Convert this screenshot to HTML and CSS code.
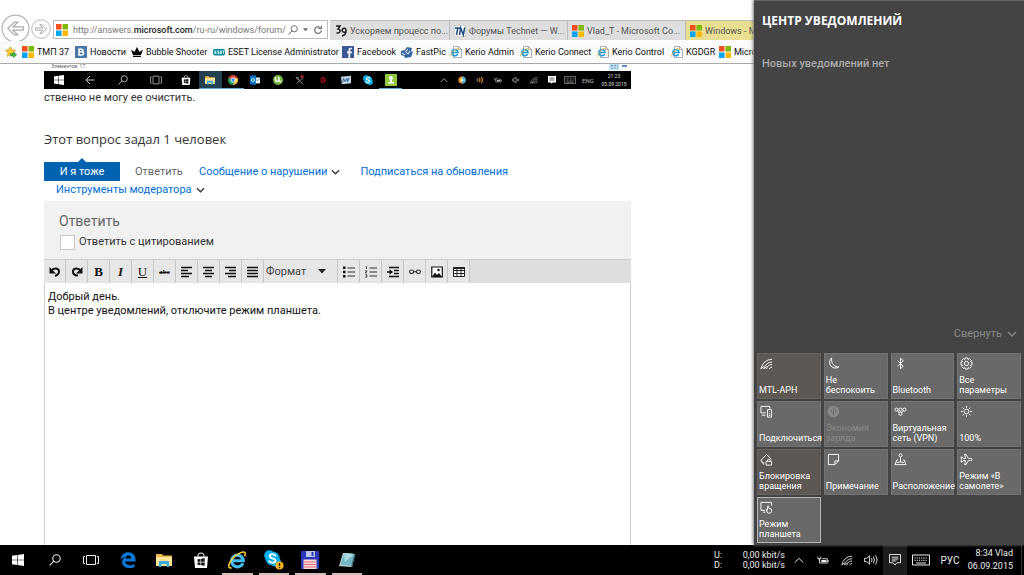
FILE: index.html
```html
<!DOCTYPE html>
<html lang="ru">
<head>
<meta charset="utf-8">
<meta name="viewport" content="width=device-width, initial-scale=1">
<title>Центр уведомлений</title>
<link rel="stylesheet" href="styles.css">
</head>
<body>
<svg class="symbols" aria-hidden="true">
  <symbol id="ms" viewBox="0 0 12 12"><path fill="#f25022" d="M0 0h5.5v5.5H0z"/><path fill="#7fba00" d="M6.5 0H12v5.5H6.5z"/><path fill="#00a4ef" d="M0 6.500h5.500V12H0z"/><path fill="#ffb900" d="M6.500 6.500H12V12H6.500z"/></symbol>
  <symbol id="win" viewBox="0 0 12 12"><path fill="#fff" d="M0 1.700 5 1v4.700H0zM5.600.900 12 0v5.700H5.600zM0 6.300h5V11l-5-.7zM5.600 6.300H12V12l-6.400-.9z"/></symbol>
  <symbol id="search" viewBox="0 0 12 12"><g fill="none" stroke="currentColor" stroke-width="1.100"><circle cx="7.500" cy="4.500" r="3.700"/><path d="M4.900 7.100.6 11.400"/></g></symbol>
  <symbol id="taskview" viewBox="0 0 16 12"><g fill="none" stroke="currentColor"><path d="M3.500 1.500h9v9h-9zM2 2.500H.500v7H2M14 2.500h1.500v7H14"/></g></symbol>
  <symbol id="store" viewBox="0 0 16 16"><path fill="none" stroke="#fff" d="M5 5V3.200Q5 1 8 1t3 2.200V5"/><path fill="#fff" d="M1 4.500h14L14 16H2z"/><path fill="#111" d="m4.500 7.300 3-.4v2.900h-3zM8.100 6.800l3.600-.5v3.500H8.100zM4.500 10.400h3v2.800l-3-.4zM8.100 10.400h3.600v3.400l-3.600-.5z"/></symbol>
  <symbol id="folder" viewBox="0 0 16 14"><path fill="#e9b94e" d="M0 1h6l1 1.500h9V13H0z"/><path fill="#fde599" d="M0 4h16v9H0z"/><path fill="#3fa9e0" d="M3 8h10v6h-2.500v-3h-5v3H3z"/></symbol>
  <symbol id="edge" viewBox="0 0 16 16"><path fill="#0b78d7" d="M.5 7.400C1.100 3 4.200.300 8.300.300c4.700 0 7.300 3.400 7.300 7.400v1.800H5.200c.2 2.700 2.200 3.700 4.800 3.700 1.800 0 3.300-.5 4.600-1.300v3.100A11 11 0 0 1 9 16c-4.200 0-6.800-2.400-6.800-6 0-2.300 1.200-4.200 3.300-5.300C3.300 5 1.600 6 .5 7.400m5-0.900h5.600c0-1.900-1-2.900-2.800-2.900S5.700 4.800 5.500 6.500"/></symbol>
  <symbol id="ie" viewBox="0 0 16 16"><path fill="none" stroke="#46bdf0" stroke-width="2.800" d="M13.200 10.900A5.200 5.200 0 1 1 13.600 8.700H4"/><path fill="none" stroke="#ffcb2f" stroke-width="1.400" d="M3.200 14.800C-.500 16-.2 11.600 4 6.800 8.500 1.600 14 .100 15 1.400c.6.700.4 1.900-.3 3.300"/></symbol>
  <symbol id="iepage" viewBox="0 0 12 12"><path fill="#fff" stroke="#999" stroke-width=".8" d="M3.500.500h5l3 3v8h-8z"/><path fill="none" stroke="#888" stroke-width=".7" d="M8.500.500v3h3"/><path fill="none" stroke="#1a9be0" stroke-width="1.700" d="M7.600 8.200A3.100 3.100 0 1 1 8 6.500H2.500"/><path fill="none" stroke="#f5b92b" stroke-width=".9" d="M1 10.600C-.500 9 3 4.300 6.500 2.700c1.500-.6 2.500-.4 2.200.900"/></symbol>
  <symbol id="skype" viewBox="0 0 16 16"><circle cx="5" cy="5" r="4.800" fill="#00aff0"/><circle cx="11" cy="11" r="4.800" fill="#00aff0"/><circle cx="8" cy="8" r="6.700" fill="#00aff0"/><path fill="none" stroke="#fff" stroke-width="1.800" stroke-linecap="round" d="M10.800 5.300C9.600 3.300 5.200 3.600 5.300 5.900c.1 2.400 5.600 1.500 5.500 4.100-.1 2.500-4.700 2.700-5.900.5"/></symbol>
  <symbol id="chevdown" viewBox="0 0 10 6"><path fill="none" stroke="currentColor" stroke-width="1.400" d="m1 1 4 4 4-4"/></symbol>
  <symbol id="chevup" viewBox="0 0 12 8"><path fill="none" stroke="currentColor" stroke-width="1.200" d="m1 7 5-5 5 5"/></symbol>
  <symbol id="wifi" viewBox="0 0 14 14"><g fill="none" stroke="currentColor"><path d="M1 13A12 12 0 0 1 13 2.500M4 13a9 9 0 0 1 9-7.500M7 13a6 6 0 0 1 6-4.800M10 13a3 3 0 0 1 3-2"/><path d="m1 13 3-3M4.500 13 7 10"/></g></symbol>
  <symbol id="battery" viewBox="0 0 14 10"><path fill="none" stroke="currentColor" d="M3 3.500V8.500h9v-5H6M13 5v2.500M1 1v2.500h3.500V1M2.700 3.500V6"/><path fill="currentColor" d="M5 5h6v2.500H5z"/></symbol>
  <symbol id="volume" viewBox="0 0 15 12"><path fill="none" stroke="currentColor" d="M.5 4.200H3L6 1.500v9L3 7.800H.500zM8 4q1.400 2 0 4M10 2.500q2.500 3.500 0 7M12 1q4 5 0 10"/></symbol>
  <symbol id="note" viewBox="0 0 13 13"><path fill="none" stroke="currentColor" d="M.5.500h12v9h-4l-2 2.500-2-2.500h-4zM3 3.500h7M3 5.500h7M3 7.500h5"/></symbol>
  <symbol id="kbd" viewBox="0 0 18 11"><path fill="none" stroke="currentColor" d="M.5.500h17v10H.500zM4 8.500h10"/><path fill="none" stroke="currentColor" stroke-dasharray="1.200 1" d="M2.500 3.500h13M2.500 5.800h13"/></symbol>
</svg>

<div class="desktop">
  <div class="workspace">
    <div class="browser">
      <header class="chrome">
        <nav class="history">
          <button class="round back" aria-label="Назад"><svg viewBox="0 0 28 28"><circle cx="14" cy="14" r="13" fill="#fff" stroke="#b7b7b7" stroke-width="1.200"/><path fill="#fff" stroke="#aaa" stroke-width="1.200" d="M6.500 14 13 7.800h3.200L11.500 12.500h10v3h-10l4.700 4.700H13z"/></svg></button>
          <button class="round forward" aria-label="Вперед"><svg viewBox="0 0 20 20"><circle cx="10" cy="10" r="9.300" fill="#fff" stroke="#b7b7b7"/><path fill="#fff" stroke="#aaa" d="M15.500 10 11 5.700H8.700l3.300 3.200H4.500v2.200H12l-3.300 3.200H11z"/></svg></button>
        </nav>
        <div class="address">
          <svg class="site"><use href="#ms"/></svg>
          <span class="url">http://answers.<strong>microsoft.com</strong>/ru-ru/windows/forum/</span>
          <button aria-label="Поиск"><svg class="mag"><use href="#search"/></svg></button>
          <button aria-label="Показать список"><svg class="tri" viewBox="0 0 6 4"><path fill="#666" d="M0 0h6L3 3.500z"/></svg></button>
          <button aria-label="Обновить"><svg class="mag" viewBox="0 0 12 12"><path fill="none" stroke="#666" stroke-width="1.400" d="M10 6.500A4 4 0 1 1 8.500 3M6.500 4.200H10V.8"/></svg></button>
        </div>
        <div class="tabs">
          <a href="#" class="tab"><svg class="site" viewBox="0 0 12 12"><path fill="none" stroke="#222" stroke-width="1.500" d="M1 1h4L3 4c3 0 3 4.500-1.500 4M11 6a2 2 0 1 1-.2-1.800c.6 3-.2 6-3.800 6.800"/></svg><span>Ускоряем процесс по...</span></a>
          <a href="#" class="tab"><svg class="site" viewBox="0 0 12 12"><path fill="#fff" stroke="#aaa" stroke-width=".6" d="M.3.300h11.400v11.400H.300z"/><path fill="none" stroke="#214b7c" stroke-width="1.500" d="M1 3h5M3.800 3 2.500 10M5.500 10l1.200-7 2.600 7 1.400-7.500"/></svg><span>Форумы Technet — W...</span></a>
          <a href="#" class="tab"><svg class="site"><use href="#ms"/></svg><span>Vlad_T - Microsoft Co...</span></a>
          <a href="#" class="tab current"><svg class="site"><use href="#ms"/></svg><span>Windows - Microsoft</span></a>
        </div>
      </header>
      <nav class="bookmarks">
        <a href="#" aria-label="Добавить в избранное"><svg viewBox="0 0 12 12"><path fill="#ffcf38" stroke="#c98c14" stroke-width=".7" d="m5.500.700 1.500 3.200 3.500.4L8 6.800l.6 3.500-3.100-1.700-3.100 1.700L3 6.800.500 4.300 4 3.900z"/><path fill="#3fb43f" stroke="#24832a" stroke-width=".5" d="M5.500 7.500h3V6l3.200 2.800-3.200 2.800V10h-3z"/></svg></a>
        <a href="#"><svg><use href="#ms"/></svg>ТМП 37</a>
        <a href="#"><svg viewBox="0 0 12 12"><path fill="#4a76a8" d="M0 0h12v12H0z"/><path fill="none" stroke="#fff" stroke-width="1.500" d="M4 3.200h2.500c2 0 2 2.500 0 2.500H4h3c2.200 0 2.200 3.200 0 3.200H4zV9"/></svg>Новости</a>
        <a href="#"><svg viewBox="0 0 12 12"><path d="M0 3.500 3.500 6 6 1l2.500 5L12 3.500 10 9H2zM2 9.700h8V11H2z"/></svg>Bubble Shooter</a>
        <a href="#"><svg viewBox="0 0 12 12"><rect y="3" width="12" height="6.500" rx="2" fill="#008c95"/><path stroke="#fff" fill="none" stroke-width=".8" d="M3.500 5H1.800v2.700h1.700M1.800 6.300h1.500M6 5H4.800v1.300H6v1.400H4.600M9 5H7.300v2.700H9M7.300 6.300H9M9.500 5h2m-1 0v2.700"/></svg>ESET License Administrator</a>
        <a href="#"><svg viewBox="0 0 12 12"><path fill="#3b5998" d="M0 0h12v12H0z"/><path fill="none" stroke="#fff" stroke-width="1.700" d="M10 2.500H8.700Q7.300 2.500 7.300 4v8M5 6.300h4.800"/></svg>Facebook</a>
        <a href="#"><svg viewBox="0 0 12 12"><path fill="#3564a5" d="m0 5 4-1 2-3 5 1-1 3 2 1-2 5-6 1-1-2-3-1z"/><path fill="none" stroke="#fff" d="m1 7 3 2M7 3 4.500 6 7 8l2-3"/></svg>FastPic</a>
        <a href="#"><svg><use href="#iepage"/></svg>Kerio Admin</a>
        <a href="#"><svg><use href="#iepage"/></svg>Kerio Connect</a>
        <a href="#"><svg><use href="#iepage"/></svg>Kerio Control</a>
        <a href="#"><svg><use href="#iepage"/></svg>KGDGR</a>
        <a href="#"><svg><use href="#ms"/></svg>Microsoft</a>
      </nav>

      <main class="page">
        <div class="shot">
          <div class="shot-status"><span>Элементов: 17</span><svg viewBox="0 0 20 6"><path fill="#b7e2f7" d="M0 0h10v6H0z"/><path stroke="#7d8b96" stroke-dasharray="2 1" d="M2 1.500h7M2 4h7"/><path fill="#5d8cc3" d="M13 1h5v2h-5z"/></svg></div>
          <div class="shot-bar">
            <div class="shot-start">
              <svg class="s10"><use href="#win"/></svg>
              <svg class="s10" viewBox="0 0 10 10"><path fill="none" stroke="#ccc" d="M9.500 5H1M5 1 1 5l4 4"/></svg>
              <svg class="s10"><use href="#search"/></svg>
              <svg class="s12" viewBox="0 0 14 12"><path fill="none" stroke="#aaa" d="M3.500 1.500h7v9h-7zM2 2.500H.500v7H2M12 2.500h1.500v7H12"/></svg>
              <svg class="s10"><use href="#store"/></svg>
            </div>
            <div class="shot-apps">
              <span class="open lit"><svg class="s10"><use href="#folder"/></svg></span>
              <span class="open"><svg class="s10" viewBox="0 0 12 12"><circle cx="6" cy="6" r="6" fill="#db4437"/><path fill="#0f9d58" d="M.800 3A6 6 0 0 0 6 12l2-4-4-2z"/><path fill="#ffcd40" d="M6 12a6 6 0 0 0 5.500-8H6l2 4z"/><circle cx="6" cy="6" r="2.600" fill="#4285f4" stroke="#fff"/></svg></span>
              <span><svg class="s10" viewBox="0 0 12 12"><path fill="#fff" d="M6 3h6v7H6z"/><path fill="#0072c6" d="m0 1 7-1v12l-7-1z"/><circle cx="3.500" cy="6" r="1.800" fill="none" stroke="#fff"/><path stroke="#0072c6" fill="none" d="m7 5 2 2 3-3"/></svg></span>
              <span><svg class="s10" viewBox="0 0 12 12"><circle cx="6" cy="6" r="6" fill="#76b83f"/><path fill="none" stroke="#fff" stroke-width="1.600" d="M3 2.500v3c0 3 4 3 4 0v-3M7 6q1 2.500 3 1.500"/></svg></span>
              <span><svg class="s10" viewBox="0 0 12 12"><path fill="none" stroke="#999" d="m1 3 9 8M10 3l-8 7M1 3h3v3"/><path fill="#c2272d" d="m6 2 2-2 1 1 2-1-2 4z"/></svg></span>
              <span><svg class="s8" viewBox="0 0 12 12"><path fill="none" stroke="#a80f12" stroke-width="2" d="M9 3.500Q4 1 3.500 6T9 8.500V6H6.500"/></svg></span>
              <span><svg class="s10" viewBox="0 0 12 12"><path fill="#c7d7ea" d="m0 2 12-1v9L1 11z"/><path fill="none" stroke="#355e94" stroke-width="1.200" d="m2 9 1-5 2 4 2-4 1 4 2-5"/></svg></span>
              <span><svg class="s10"><use href="#skype"/></svg></span>
              <span class="open"><svg class="s12" viewBox="0 0 12 12"><path fill="#93c83d" d="M0 0h12v12H0z"/><circle cx="6" cy="4" r="2" fill="#fff"/><path fill="#fff" d="M5 6h2v2h2v1.500H3V8h2z"/></svg></span>
            </div>
            <div class="shot-tray">
              <svg class="s8"><use href="#chevup"/></svg>
              <svg class="s8" viewBox="0 0 10 10"><circle cx="5" cy="5" r="4.500" fill="#f39b27"/><path fill="#55b5e5" d="M5 .5a4.500 4.500 0 0 1 0 9z"/><circle cx="5" cy="5" r="1.500" fill="#fff"/></svg>
              <svg class="s8" viewBox="0 0 10 10"><path fill="none" stroke="#777" stroke-width="2" d="M2 3v4"/><path fill="none" stroke="#d8832b" stroke-width="1.500" d="M4 2.500q2 2.500 0 5M6.500 1q3 4 0 8"/></svg>
              <svg class="s8"><use href="#battery"/></svg>
              <svg class="s8" viewBox="0 0 11 10"><path fill="none" stroke="currentColor" d="M1 3.500h1.500l3-2.500v8l-3-2.500H1zM7 3.500l3 3m0-3-3 3"/></svg>
              <svg class="s8"><use href="#wifi"/></svg>
              <svg class="s8" viewBox="0 0 10 10"><path fill="#fff" d="M0 0h10v8H6L4 10V8H0z"/><path stroke="#333" d="M2 2.500h6M2 5h6"/></svg>
              <svg class="s12"><use href="#kbd"/></svg>
              <span>ENG</span>
            </div>
            <div class="shot-clock">21:23<br>05.09.2015</div>
          </div>
        </div>
        <p class="tail">ственно не могу ее очистить.</p>
        <h2>Этот вопрос задал 1 человек</h2>
        <div class="actions">
          <button class="metoo">И я тоже</button>
          <a href="#" class="reply">Ответить</a>
          <a href="#">Сообщение о нарушении<svg><use href="#chevdown"/></svg></a>
          <a href="#" class="subscribe">Подписаться на обновления</a>
        </div>
        <div class="actions second"><a href="#">Инструменты модератора<svg><use href="#chevdown"/></svg></a></div>
        <section class="editor">
          <div class="editor-head">
            <h3>Ответить</h3>
            <label><input type="checkbox">Ответить с цитированием</label>
          </div>
          <div class="toolbar">
            <button aria-label="Отменить"><svg viewBox="0 0 12 12"><path fill="none" stroke="#111" stroke-width="2" d="M2 5c3-4 8-3 8 .5 0 2-1.500 3.500-4 4.500"/><path fill="#111" d="M.5 1v6.500H7z"/></svg></button>
            <button aria-label="Повторить"><svg viewBox="0 0 12 12"><path fill="none" stroke="#111" stroke-width="2" d="M10 5C7 1 2 2 2 5.500 2 8 4 9.500 7 9.500"/><path fill="#111" d="M11.500 1v6.500H5z"/></svg></button>
            <button class="glyph bold">B</button>
            <button class="glyph italic">I</button>
            <button class="glyph under">U</button>
            <button class="glyph strike">abc</button>
            <button aria-label="По левому краю"><svg viewBox="0 0 12 12"><path stroke="#111" stroke-width="1.600" d="M0 1.500h11M0 4.500h7M0 7.500h11M0 10.500h8"/></svg></button>
            <button aria-label="По центру"><svg viewBox="0 0 12 12"><path stroke="#111" stroke-width="1.600" d="M0 1.500h11M2 4.500h7M0 7.500h11M2 10.500h7"/></svg></button>
            <button aria-label="По правому краю"><svg viewBox="0 0 12 12"><path stroke="#111" stroke-width="1.600" d="M0 1.500h11M4 4.500h7M0 7.500h11M3 10.500h8"/></svg></button>
            <button aria-label="По ширине"><svg viewBox="0 0 12 12"><path stroke="#111" stroke-width="1.600" d="M0 1.500h11M0 4.500h11M0 7.500h11M0 10.500h11"/></svg></button>
            <span class="format"><select aria-label="Формат"><option>Формат</option></select><svg viewBox="0 0 8 5"><path fill="#222" d="M0 0h8L4 4.500z"/></svg></span>
            <button aria-label="Маркированный список"><svg viewBox="0 0 12 12"><path fill="#111" d="M0 .5h2.500V3H0zM0 4.700h2.500v2.500H0zM0 9h2.500v2.500H0z"/><path stroke="#333" d="M4.500 2H12M4.500 6H12M4.500 10H12"/></svg></button>
            <button aria-label="Нумерованный список"><svg viewBox="0 0 12 12"><path fill="none" stroke="#333" stroke-width=".8" d="M.5.700h1V3M.3 4.700h1.500v1.100H.500V7h1.500M.3 8.700h1.500v2.500H.300M.500 10h1.200"/><path stroke="#333" d="M4.500 2H12M4.500 6H12M4.500 10H12"/></svg></button>
            <button aria-label="Увеличить отступ"><svg viewBox="0 0 12 12"><path stroke="#111" stroke-width="1.400" d="M2 1.500h10M7 4.500h5M7 7.500h5M2 10.500h10M0 6h3"/><path fill="#111" d="M2.500 3.300 6 6 2.500 8.700z"/></svg></button>
            <button aria-label="Ссылка"><svg viewBox="0 0 12 12"><g fill="none" stroke="#333" stroke-width="1.100"><rect x=".6" y="4" width="4" height="3.500" rx="1.700"/><rect x="7.400" y="4" width="4" height="3.500" rx="1.700"/><path d="M4 5.700h4"/></g></svg></button>
            <button aria-label="Изображение"><svg viewBox="0 0 12 12"><path fill="#fff" stroke="#111" stroke-width="1.200" d="M.8 1h10.500v10H.800z"/><path fill="#111" d="m1 11 3-4.500L6 9l2-2 3 4z"/><circle cx="7.500" cy="4" r="1.200"/></svg></button>
            <button aria-label="Таблица"><svg viewBox="0 0 12 12"><path fill="#fff" stroke="#222" d="M.5 1.500h11v9H.500zM.500 4.500h11M.500 7.500h11M4 2v9M8 2v9"/><path fill="#222" d="M0 1h12v2H0z"/></svg></button>
          </div>
          <textarea aria-label="Текст ответа">Добрый день.
В центре уведомлений, отключите режим планшета.</textarea>
        </section>
      </main>
    </div>

    <aside class="center">
      <h1>ЦЕНТР УВЕДОМЛЕНИЙ</h1>
      <p class="empty">Новых уведомлений нет</p>
      <button class="collapse">Свернуть <svg><use href="#chevdown"/></svg></button>
      <div class="tiles">
        <button class="tile on"><svg><use href="#wifi"/></svg><span>MTL-APH</span></button>
        <button class="tile"><svg viewBox="0 0 14 14"><path d="M5 1A6 6 0 1 0 13 10.500C8.500 11.500 4 7 5 1z"/></svg><span>Не<br>беспокоить</span></button>
        <button class="tile"><svg viewBox="0 0 14 14"><path d="m4 4 6 6-3 2.500v-11L10 4l-6 6"/></svg><span>Bluetooth</span></button>
        <button class="tile"><svg viewBox="0 0 14 14"><circle cx="7" cy="7" r="2.300"/><path d="m5.700 1 2.600 0 .4 1.600 1.600-.8 1.900 1.900-.8 1.600 1.600.4v2.600l-1.600.4.8 1.600-1.900 1.900-1.600-.8-.4 1.600H5.700l-.4-1.600-1.600.8-1.900-1.900.8-1.600L1 8.300V5.700l1.600-.4-.8-1.600 1.900-1.900 1.600.8z"/></svg><span>Все<br>параметры</span></button>
        <button class="tile"><svg viewBox="0 0 14 14"><path d="M6 8.500H1v-7h9.500V4M2 11h4M8 5h4.500v8H8zM10.200 7v.6M9.500 9.500h1.500M9.500 11.300h1.500"/></svg><span>Подключиться</span></button>
        <button class="tile" disabled><svg viewBox="0 0 14 14"><circle cx="7" cy="7" r="5.800" fill="#8a8a8a"/><path stroke="#686868" d="M7 11V6M7 9C3 8 4.500 5 7 3c2.500 2 4 5 0 6"/></svg><span>Экономия<br>заряда</span></button>
        <button class="tile"><svg viewBox="0 0 14 14"><circle cx="2.700" cy="5" r="1.700"/><circle cx="7" cy="5" r="1.700"/><circle cx="11.300" cy="5" r="1.700"/><circle cx="7" cy="9.500" r="1.700"/><path d="m4 6.500 2 2M10 6.500l-2 2"/></svg><span>Виртуальная<br>сеть (VPN)</span></button>
        <button class="tile"><svg viewBox="0 0 14 14"><circle cx="7" cy="7" r="2.500"/><path d="M7 1v2M7 11v2M1 7h2M11 7h2M2.800 2.800l1.400 1.400M9.800 9.800l1.400 1.400M11.200 2.800 9.800 4.200M4.200 9.800l-1.400 1.400"/></svg><span>100%</span></button>
        <button class="tile on"><svg viewBox="0 0 14 14"><path d="M4.500 11.500 1 8l6-6.500L12.500 7M4 12.500 1 8M6.500 9h6v4h-6zM8 9V7.500q1.500-2 3 0V9"/></svg><span>Блокировка<br>вращения</span></button>
        <button class="tile"><svg viewBox="0 0 14 14"><path d="M1.500 1.500h11v7l-4 4h-7zM12.500 8.500h-4v4"/></svg><span>Примечание</span></button>
        <button class="tile"><svg viewBox="0 0 14 14"><circle cx="7" cy="2.500" r="1.700"/><path d="M7 4.200V10M4.500 7.500H3l-2 5h12l-2-5H9.500M3 10.500l4-1 4 1"/></svg><span>Расположение</span></button>
        <button class="tile"><svg viewBox="0 0 14 14"><path d="M13 7q0 1.200-1.500 1.200H9L6.500 12.500H5l1-4.300H3.500L2.300 9.700H1L1.700 7 1 4.300h1.300l1.200 1.500H6L5 1.500h1.500L9 5.800h2.500Q13 5.800 13 7z"/></svg><span>Режим «В<br>самолете»</span></button>
        <button class="tile focused"><svg viewBox="0 0 14 14"><path d="M5.500 10H1V1.500h11.500V5M3 12h3M8 10V5.700q1-1.200 1.500 0V8l3 .8V11q0 2-2 2H8.500L6.500 9.500z"/></svg><span>Режим<br>планшета</span></button>
      </div>
    </aside>
  </div>

  <footer class="taskbar">
    <div class="apps">
      <button aria-label="Пуск"><svg class="s12"><use href="#win"/></svg></button>
      <button aria-label="Поиск"><svg class="s12"><use href="#search"/></svg></button>
      <button aria-label="Представление задач"><svg class="s16"><use href="#taskview"/></svg></button>
      <button aria-label="Edge"><svg class="s16"><use href="#edge"/></svg></button>
      <button aria-label="Проводник"><svg class="s16"><use href="#folder"/></svg></button>
      <button aria-label="Магазин"><svg class="s16"><use href="#store"/></svg></button>
      <button class="running" aria-label="Internet Explorer"><svg class="s18"><use href="#ie"/></svg></button>
      <button class="running" aria-label="Skype"><svg class="s20" viewBox="0 0 20 20"><svg width="17" height="17"><use href="#skype"/></svg><circle cx="15.500" cy="15.500" r="4" fill="#fbb324"/><path stroke="#222" stroke-width="1.400" d="M15.500 13v3M15.500 17v1.300"/></svg></button>
      <button class="running" aria-label="Total Commander"><svg class="s18" viewBox="0 0 18 18"><path fill="#2b36b8" d="M0 0h18v18H0z"/><path fill="#bcc6ea" d="M5 0h9v6H5z"/><path fill="#2b36b8" d="M10.500 1h2v4h-2z"/><path fill="#fbd9d6" d="M2.500 8.500h13V18h-13z"/><path stroke="#db6d7a" d="M3 11h12M3 13.500h12M3 16h12"/></svg></button>
      <button class="running" aria-label="Блокнот"><svg class="s18" viewBox="0 0 18 18"><path fill="#ddd" d="m5 2 12 1-3 13-13-1z"/><path fill="#73b7c6" d="m6 2 10 1-3 12-11-1z"/><path fill="#a9dce2" d="m6 2 10 1-9 8z"/><path fill="#3c6f7c" d="m13 15 1 1.500 3.500-13L16 3z"/></svg></button>
    </div>
    <div class="net"><span>U:</span><span>0,00 kbit/s</span><span>D:</span><span>0,00 kbit/s</span></div>
    <div class="tray">
      <button aria-label="Скрытые значки"><svg class="s10"><use href="#chevup"/></svg></button>
      <button aria-label="Батарея"><svg class="s12"><use href="#battery"/></svg></button>
      <button aria-label="Сеть"><svg class="s12"><use href="#wifi"/></svg></button>
      <button aria-label="Громкость"><svg class="s14"><use href="#volume"/></svg></button>
      <button class="active" aria-label="Центр уведомлений"><svg class="s12"><use href="#note"/></svg></button>
      <button class="wide" aria-label="Клавиатура"><svg class="s18"><use href="#kbd"/></svg></button>
      <button class="lang">РУС</button>
    </div>
    <div class="clock">8:34 Vlad<br>06.09.2015</div>
  </footer>
</div>
</body>
</html>
```
FILE: styles.css
```css
* { box-sizing: border-box; }
body { margin: 0; font-family: Roboto, "Noto Sans", sans-serif; font-size: 11px; color: #333; background: #fff; }
button, input, select, textarea { font: inherit; color: inherit; }
button { border: 0; padding: 0; background: none; }
a { color: inherit; text-decoration: none; }
h1, h2, h3, p { margin: 0; font-weight: 400; }
svg { display: block; flex: none; }
.symbols { width: 0; height: 0; position: absolute; }
.s8 { width: 8px; height: 8px; }
.s10 { width: 10px; height: 10px; }
.s12 { width: 12px; height: 12px; }
.s14 { width: 14px; height: 14px; }
.s16 { width: 16px; height: 16px; }
.s18 { width: 18px; height: 18px; }
.s20 { width: 20px; height: 20px; }

.desktop { display: flex; flex-direction: column; height: 100vh; overflow: hidden; }
.workspace { flex: 1; display: flex; min-height: 0; }
.browser { flex: 1; min-width: 0; display: flex; flex-direction: column; overflow: hidden; }

.chrome { display: flex; height: 41px; padding-top: 14px; font-size: 9px; }
.history { display: flex; width: 53px; flex: none; overflow: hidden; gap: 1px; padding-left: 1px; }
.round { flex: none; display: flex; align-items: flex-start; }
.back svg { width: 29px; height: 29px; }
.forward svg { width: 20px; height: 20px; margin-top: 5px; }
.address { flex: none; width: 275px; height: 19px; margin-top: 6px; border: 1px solid #bbb; display: flex; align-items: center; gap: 5px; padding: 0 4px 0 2px; }
.url { flex: 1; min-width: 0; color: #777; white-space: nowrap; }
.url strong { color: #222; font-weight: 500; }
.site { width: 12px; height: 12px; }
.mag { width: 10px; height: 10px; color: #666; }
.tri { width: 5px; height: 4px; }
.tabs { flex: 1; display: flex; min-width: 0; margin: 6px 0 1px 2px; overflow: hidden; border-top: 1px solid #bbb; }
.tab { flex: none; width: 118px; display: flex; align-items: center; gap: 3px; padding-left: 4px; background: #dedede; color: #555; border-right: 1px solid #bbb; white-space: nowrap; overflow: hidden; }
.tab:first-child { width: 120px; padding-left: 5px; }
.tab.current { background: #e8df91; }

.bookmarks { height: 23px; display: grid; grid-template-columns: 17px 53px 56px 82px 129px 59px 49px 70px 77px 74px 48px 80px; align-items: center; padding-left: 5px; background: #fafafa; border-bottom: 1px solid #aaa; font-size: 9px; color: #111; white-space: nowrap; flex: none; overflow: hidden; }
.bookmarks a { display: flex; align-items: center; gap: 3px; }
.bookmarks svg { width: 12px; height: 12px; }

.page { flex: 1; min-height: 0; display: flex; flex-direction: column; max-width: 631px; padding-left: 44px; }
.shot-status { height: 7px; display: flex; justify-content: space-between; padding: 0 2px 0 7px; font-size: 5px; line-height: 5px; color: #667; overflow: hidden; }
.shot-status svg { width: 20px; height: 6px; }
.shot-bar { display: flex; height: 18px; background: #000; color: #bbb; justify-content: space-between; font-size: 6px; }
.shot-start { display: grid; grid-template-columns: 29px 33px 33px 33px 27px; place-items: center; }
.shot-apps { display: grid; grid-template-columns: repeat(9, 1fr); width: 203px; margin-right: auto; }
.shot-apps span { display: flex; align-items: center; justify-content: center; border-bottom: 1px solid transparent; }
.shot-apps .open { border-color: #5aa9e0; }
.shot-apps .lit { background: #233f52; }
.shot-tray { display: grid; grid-template-columns: repeat(9, 18px); place-items: center; }
.shot-clock { width: 34px; text-align: center; line-height: 8px; color: #ddd; padding-top: 1px; white-space: nowrap; font-size: 5px; }

.tail { line-height: 18px; }
.page h2 { margin-top: 22px; font-family: "Open Sans", "Noto Sans", sans-serif; font-size: 13px; line-height: 20px; }
.actions { display: flex; align-items: flex-start; margin-top: 13px; line-height: 20px; color: #006fd6; white-space: nowrap; }
.actions a { display: flex; align-items: center; gap: 4px; }
.actions svg { width: 9px; height: 6px; color: #333; }
.metoo { position: relative; width: 76px; height: 19px; background: #0063b1; color: #fff; }
.metoo::before { content: ""; position: absolute; left: 34px; top: -4px; border: 4px solid transparent; border-top: 0; border-bottom-color: #0063b1; }
.actions .reply { color: #666; width: 64px; margin-left: 15px; }
.subscribe { margin-left: 20px; }
.actions.second { margin: 0; padding-left: 12px; line-height: 16px; }

.editor { flex: 1; min-height: 0; display: flex; flex-direction: column; margin-top: 3px; }
.editor-head { height: 58px; padding: 10px 15px; background: #f1f1f1; }
.editor-head h3 { font-size: 14px; line-height: 20px; color: #666; }
.editor-head label { display: flex; align-items: center; gap: 4px; line-height: 22px; }
.editor-head input { appearance: none; width: 15px; height: 15px; margin: 0 0 0 1px; border: 1px solid #c8c8c8; background: #fff; }
.toolbar { display: flex; height: 24px; background: #dedede; border-top: 1px solid #ccc; }
.toolbar button { width: 22px; display: flex; align-items: center; justify-content: center; border-right: 1px solid #c6c6c6; background: #e6e6e6; color: #111; }
.toolbar button svg { width: 12px; height: 12px; }
.toolbar .glyph { font-family: "Liberation Serif", serif; font-size: 13px; }
.bold { font-weight: 700; }
.italic { font-style: italic; font-weight: 700; }
.under { text-decoration: underline; }
.toolbar .strike { font-size: 7px; font-weight: 700; text-decoration: line-through; }
.format { width: 74px; display: flex; align-items: center; background: #e6e6e6; border-right: 1px solid #c6c6c6; }
.format select { appearance: none; border: 0; background: none; width: 54px; padding: 0 0 0 2px; color: #444; }
.format svg { width: 8px; height: 5px; }
.editor textarea { flex: 1; min-height: 0; width: 100%; border: 1px solid #ccc; border-width: 0 1px; padding: 7px 3px; line-height: 14px; resize: none; outline: 0; color: #111; background: #fff; }

.center { flex: none; width: 270px; display: flex; flex-direction: column; background: #444; color: #fff; padding: 10px 3px 2px; box-shadow: -1px 0 3px #777; border-top: 1px solid #666; position: relative; }
.center h1 { padding-left: 5px; font-family: "Open Sans", "Noto Sans", sans-serif; font-size: 12px; line-height: 20px; font-weight: 700; }
.empty { padding: 23px 5px 0; line-height: 20px; color: #aaa; font-weight: 500; }
.collapse { align-self: flex-end; margin: auto 4px 9px 0; display: flex; align-items: center; gap: 5px; line-height: 20px; color: #888; }
.collapse svg { width: 10px; height: 6px; }
.tiles { display: grid; grid-template-columns: repeat(4, 1fr); grid-auto-rows: 46px; gap: 2px 3px; }
.tile { display: flex; flex-direction: column; justify-content: space-between; align-items: flex-start; text-align: left; background: #696969; color: #fff; padding: 3px 0 3px 1px; font-size: 9px; line-height: 10px; border: 1px solid #737373; white-space: nowrap; min-width: 0; }
.tile svg { width: 13px; height: 13px; margin-left: 1px; fill: none; stroke: currentColor; stroke-width: 1; }
.tile.on { background: #5d5854; border-color: #67625e; }
.tile:disabled { color: #8a8a8a; }
.tile.focused { border: 1px solid #b5b5b5; }

.taskbar { flex: none; height: 30px; display: flex; background: #000; color: #eee; font-size: 9px; }
.apps { display: grid; grid-template-columns: repeat(10, 1fr); width: 365px; margin-right: auto; }
.apps button { display: flex; align-items: center; justify-content: center; margin: 0 3px; border-bottom: 2px solid transparent; border-top: 2px solid transparent; }
.apps .running { border-bottom-color: #d4bdb8; }
.net { display: grid; grid-template-columns: 1fr auto; width: 71px; line-height: 10px; align-content: center; margin-right: 2px; white-space: nowrap; }
.tray { display: grid; grid-template-columns: repeat(5, 24px) 28px 30px; }
.tray button { display: flex; align-items: center; justify-content: center; }
.tray .active { background: #1d1d1d; }
.lang { font-size: 10px; }
.clock { width: 57px; margin: 0 2px 0 0; text-align: right; line-height: 13px; padding: 2px 8px 0 0; border-right: 1px solid #333; white-space: nowrap; }
```
